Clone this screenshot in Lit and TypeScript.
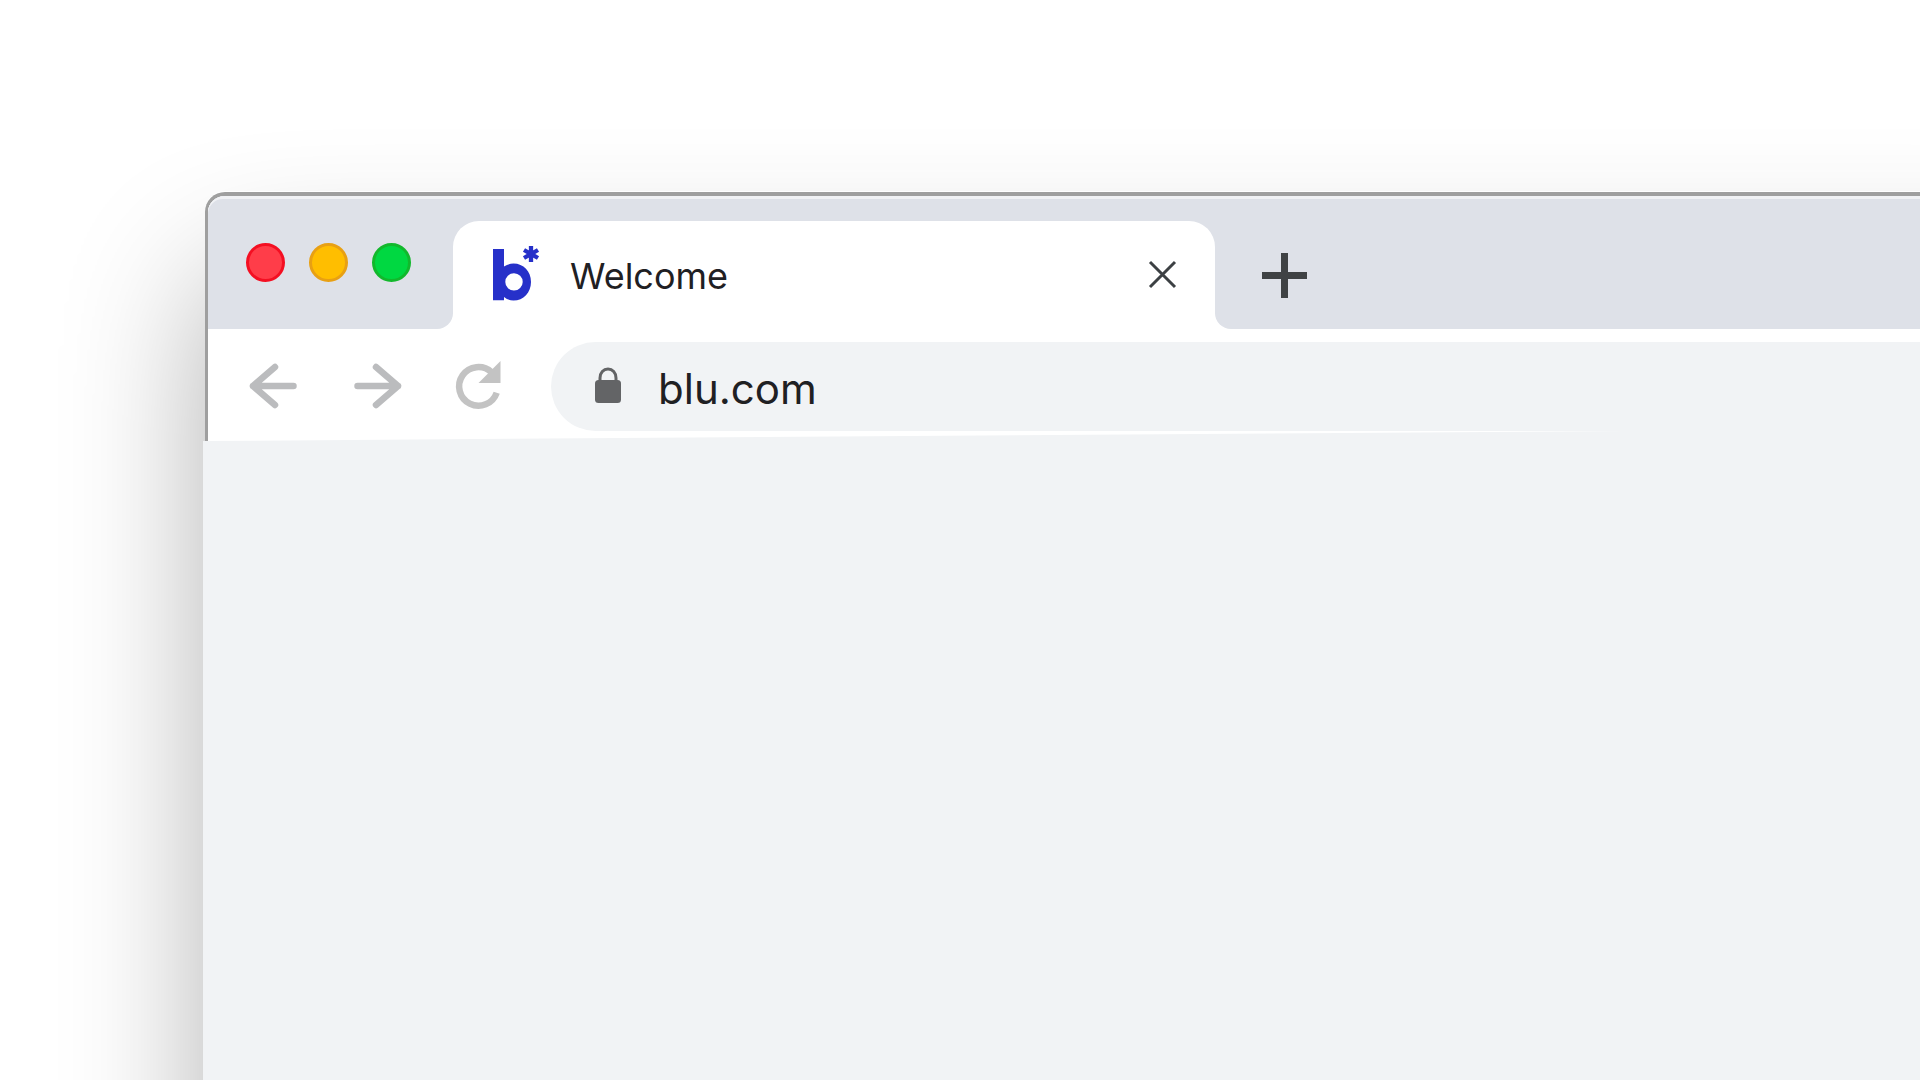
import { LitElement, html, css } from "lit";
import { customElement, state } from "lit/decorators.js";

@customElement("app-root")
export class AppRoot extends LitElement {
  @state() private tabName = "Welcome";
  @state() private address = "blu.com";

  static styles = css`
    :host {
      display: block;
      box-sizing: border-box;
      min-height: 100vh;
      padding: 192px 0 0 203px;
      overflow: hidden;
      background: #fff;
      color: #1f2023;
      font-family: Inter, "Liberation Sans", sans-serif;
    }
    * {
      box-sizing: border-box;
    }
    button {
      display: block;
      flex: none;
      padding: 0;
      border: 0;
      background: none;
      cursor: pointer;
    }
    svg {
      display: block;
      overflow: visible;
    }
    .window {
      display: flex;
      flex-direction: column;
      height: 100vh;
      margin: 0 -160px -192px 0;
    }
    .shade {
      display: flex;
      flex: 1;
      flex-direction: column;
      margin-left: 2px;
      border-radius: 20px 0 0 0;
      box-shadow: 0 -1px 0 #fff, 0 84px 140px rgba(0, 0, 0, 0.31);
    }
    .chrome {
      border: solid #9f9f9f;
      border-width: 4px 0 0 3px;
      border-radius: 20px 0 0 0;
      background: #fff;
      overflow: hidden;
    }
    .strip {
      display: flex;
      height: 133px;
      background: #fff;
    }
    .lights {
      display: flex;
      gap: 24px;
      width: 245px;
      padding: 47px 0 0 38px;
      border-radius: 15px 0 16px 0;
      background: #dee1e8;
      box-shadow: inset 0 3px 0 #f1f2f5;
    }
    .light {
      width: 39px;
      height: 39px;
      border: 3px solid;
      border-radius: 50%;
    }
    .close {
      border-color: #f40f22;
      background: #ff3d49;
    }
    .minimise {
      border-color: #e8a013;
      background: #ffbe00;
    }
    .zoom {
      border-color: #12b82c;
      background: #00d841;
    }
    .slot {
      width: 762px;
      padding-top: 25px;
      background: #dee1e8;
      box-shadow: inset 0 3px 0 #f1f2f5;
    }
    .tab {
      display: flex;
      align-items: center;
      height: 108px;
      padding: 0 38px 0 40px;
      border-radius: 26px 26px 0 0;
      background: #fff;
    }
    .name {
      flex: 1;
      padding: 2px 0 0 31px;
      font-size: 36px;
      line-height: 44px;
    }
    .rest {
      display: flex;
      flex: 1;
      align-items: center;
      padding: 25px 0 0 47px;
      border-radius: 0 0 0 16px;
      background: #dee1e8;
      box-shadow: inset 0 3px 0 #f1f2f5;
    }
    .toolbar {
      display: flex;
      align-items: center;
      gap: 56px;
      padding: 13px 0 10px 41px;
    }
    .address {
      display: flex;
      flex: 1;
      align-items: center;
      gap: 37px;
      height: 89px;
      margin-left: -6px;
      padding-left: 44px;
      border-radius: 45px 0 0 45px;
      background: #f1f3f5;
    }
    .url {
      flex: 1;
      min-width: 0;
      padding: 4px 0 0;
      border: 0;
      outline: 0;
      background: none;
      color: inherit;
      font: inherit;
      font-size: 42px;
      line-height: 52px;
    }
    .page {
      flex: 1;
      margin: -10px 0 0 -2px;
      background: #f1f3f5;
      clip-path: polygon(0 10px, 76% 0, 100% 0, 100% 100%, 0 100%);
    }
  `;

  private onInput(e: Event) {
    this.address = (e.target as HTMLInputElement).value;
  }

  render() {
    return html`
      <div class="window">
        <div class="shade">
          <header class="chrome">
            <div class="strip">
              <div class="lights">
                <button class="light close" aria-label="Close window"></button>
                <button class="light minimise" aria-label="Minimise window"></button>
                <button class="light zoom" aria-label="Zoom window"></button>
              </div>
              <div class="slot">
                <div class="tab">
                  <svg width="46" height="58" viewBox="0 0 46 58" fill="#2630c9" aria-hidden="true">
                    <path
                      fill-rule="evenodd"
                      d="M0 3H11V20.500C14 18.500 17 17.600 20.500 17.600C30.500 17.600 38 25.500 38 36C38 46.500 30.500 54.600 20.500 54.600C17 54.600 14 53.300 11 51V54.300H0ZM21 27.200A8.700 8.700 0 1 0 21 44.600A8.700 8.700 0 1 0 21 27.200Z"
                    />
                    <path
                      d="M38 0V16M31 4L45 12M31 12L45 4"
                      fill="none"
                      stroke="#2630c9"
                      stroke-width="4.300"
                    />
                  </svg>
                  <span class="name">${this.tabName}</span>
                  <button aria-label="Close tab">
                    <svg width="28" height="28" viewBox="0 0 28 28">
                      <path d="M1 1L26 26M26 1L1 26" stroke="#3c4043" stroke-width="3" />
                    </svg>
                  </button>
                </div>
              </div>
              <div class="rest">
                <button aria-label="New tab">
                  <svg width="45" height="45" viewBox="0 0 45 45">
                    <path d="M22.500 0V45M0 22.500H45" stroke="#3f4244" stroke-width="7" />
                  </svg>
                </button>
              </div>
            </div>
            <nav class="toolbar">
              <button aria-label="Back">
                <svg width="48" height="47" viewBox="0 0 48 47" fill="none" stroke="#bbbcbe" stroke-width="6.500" stroke-linecap="round" stroke-linejoin="round">
                  <path d="M44.500 23H4M26 4L4 23L26 42" />
                </svg>
              </button>
              <button aria-label="Forward">
                <svg width="48" height="47" viewBox="0 0 48 47" fill="none" stroke="#bbbcbe" stroke-width="6.500" stroke-linecap="round" stroke-linejoin="round">
                  <path d="M4.500 23H45M23 4L45 23L23 42" />
                </svg>
              </button>
              <button aria-label="Reload">
                <svg width="44" height="51" viewBox="0 0 44 51">
                  <path d="M34.500 11.200A19.300 19.300 0 1 0 39.700 31.700" fill="none" stroke="#c3c3c3" stroke-width="6.500" />
                  <path d="M43.500 0V22H21.500Z" fill="#c3c3c3" />
                </svg>
              </button>
              <div class="address">
                <svg width="26" height="40" viewBox="0 0 26 40" aria-hidden="true">
                  <path d="M5 16V11C5 5.500 8.500 2 13 2S21 5.500 21 11V16" fill="none" stroke="#636466" stroke-width="3" />
                  <rect y="13" width="26" height="23" rx="3.500" fill="#636466" />
                </svg>
                <input
                  class="url"
                  type="text"
                  aria-label="Address"
                  spellcheck="false"
                  .value=${this.address}
                  @input=${this.onInput}
                />
              </div>
            </nav>
          </header>
          <main class="page"></main>
        </div>
      </div>
    `;
  }
}
